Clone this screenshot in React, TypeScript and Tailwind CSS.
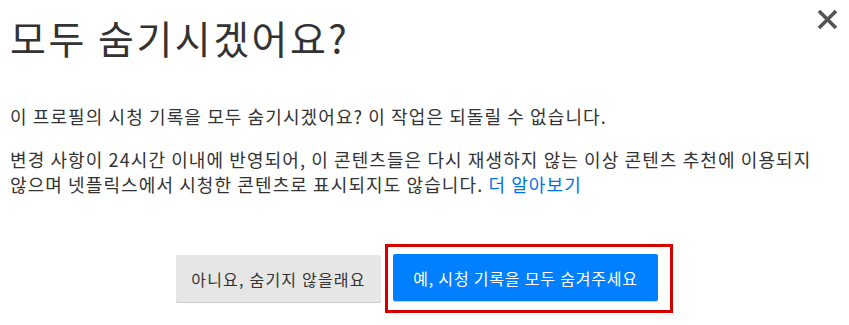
import * as React from "react";

export default function App() {
  return (
    <div
      className="relative h-[325px] w-[849px] overflow-hidden bg-white text-[#333]"
      style={{ fontFamily: '"Noto Sans CJK KR", "Noto Sans", sans-serif' }}
    >
      {/* close button */}
      <button className="absolute top-[9px] right-[11px] flex h-[21px] w-[21px] items-center justify-center">
        <svg width="21" height="21" viewBox="0 0 21 21">
          <path
            d="M2 2 L19 19 M19 2 L2 19"
            stroke="#555"
            strokeWidth="3.6"
            strokeLinecap="butt"
          />
        </svg>
      </button>

      <div className="px-[10px] pt-[14px] break-keep">
        <h1 className="text-[39px] leading-[46px] font-normal tracking-[2.5px] text-[#333]">
          모두 숨기시겠어요?
        </h1>

        <p className="mt-[44px] text-[18px] leading-[25px] tracking-[1.1px]">
          이 프로필의 시청 기록을 모두 숨기시겠어요? 이 작업은 되돌릴 수 없습니다.
        </p>
        <p className="mt-[18px] text-[18px] leading-[25px] tracking-[1.1px]">
          변경 사항이 24시간 이내에 반영되어, 이 콘텐츠들은 다시 재생하지 않는 이상 콘텐츠 추천에 이용되지
          <br />
          않으며 넷플릭스에서 시청한 콘텐츠로 표시되지도 않습니다.{" "}
          <a className="text-[#0073e6]">더 알아보기</a>
        </p>
      </div>

      <div className="mt-[47px] flex items-center justify-center">
        <button className="h-[47px] w-[205px] rounded-[2px] bg-[#e6e6e6] text-[16px] tracking-[1.2px] text-[#333] shadow-[0_1px_0_rgba(0,0,0,0.2)]">
          아니요, 숨기지 않을래요
        </button>
        <div className="ml-[4px] border-[3px] border-[#d40000] pt-[7px] pr-[12px] pb-[9px] pl-[5px]">
          <button className="h-[47px] w-[265px] rounded-[2px] bg-[#0080ff] text-[16px] tracking-[0.8px] text-white shadow-[0_1px_0_rgba(0,0,0,0.2)]">
            예, 시청 기록을 모두 숨겨주세요
          </button>
        </div>
      </div>
    </div>
  );
}
